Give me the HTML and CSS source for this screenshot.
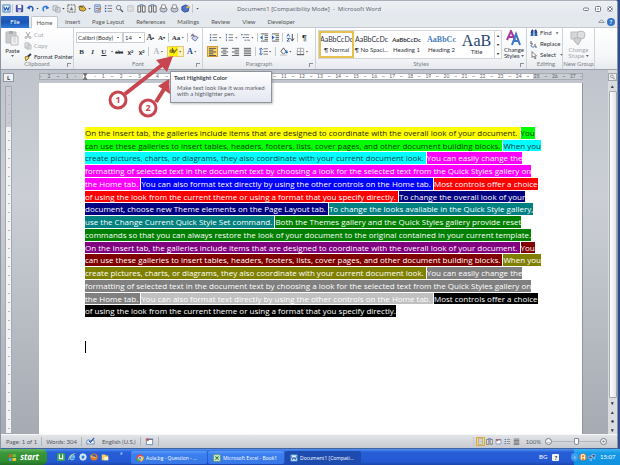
FILE: index.html
```html
<!DOCTYPE html>
<html lang="en">
<head>
<meta charset="utf-8">
<title>Document1 [Compatibility Mode] - Microsoft Word</title>
<link rel="stylesheet" href="styles.css">
</head>
<body>
<svg class="sprite" aria-hidden="true">
  <symbol id="word" viewBox="0 0 10 10"><path d="M1 1h8v8H1z" fill="#e7f2fc" stroke="#3a7ec0"/><path d="M2 3l1.3 4L5 4l1.6 3L8 3" fill="none" stroke="#1c5ba8" stroke-width="1.2"/></symbol>
  <symbol id="save" viewBox="0 0 10 10"><path d="M1.5 1.5h7v7h-7z" fill="#5b62b8" stroke="#34358a"/><path d="M3 1h4v3.500H3z" fill="#fff"/><path d="M3.500 6h3v3h-3z" fill="#c9cdf0"/></symbol>
  <symbol id="undo" viewBox="0 0 10 10"><path d="M3 4c3-3 6 0 4 4" fill="none" stroke="#2a62b8" stroke-width="1.600"/><path d="M0.500 4.500L4.500 1.500V6z" fill="#2a62b8"/></symbol>
  <symbol id="redo" viewBox="0 0 10 10"><path d="M7 4C4 1 1 4 3 8" fill="none" stroke="#2a78d0" stroke-width="1.600"/><path d="M9.500 4.500L5.500 1.500V6z" fill="#2a78d0"/></symbol>
  <symbol id="shapes" viewBox="0 0 10 10"><path d="M1 2h5v5H1zM4 4h5v5H4z" fill="#ddd" stroke="#a9adb3"/></symbol>
  <symbol id="frame" viewBox="0 0 10 10"><path d="M1 1h8v8H1z" fill="none" stroke="#555" stroke-dasharray="2 1"/><path d="M3 7l2-4 2 4z" fill="#777"/></symbol>
  <symbol id="tag" viewBox="0 0 10 10"><path d="M1 3l5-1 3 4-3 2-4-1z" fill="#e0b13c" stroke="#776020"/><path d="M2 2l3 2" stroke="#333"/></symbol>
  <symbol id="doc" viewBox="0 0 10 10"><path d="M2 1h6v8H2z" fill="#e9f1fb" stroke="#527bb0"/><path d="M3 3h4M3 5h4M3 7h2" stroke="#5a7fb8"/><path d="M5 8l4-4" stroke="#d27f31" stroke-width="1.500"/></symbol>
  <symbol id="list" viewBox="0 0 10 10"><path d="M1 2h1.500M1 5h1.500M1 8h1.500" stroke="#315faf" stroke-width="1.500"/><path d="M4 2h5M4 5h5M4 8h5" stroke="#777"/></symbol>
  <symbol id="find" viewBox="0 0 10 10"><circle cx="4" cy="4" r="2.500" fill="#e5eef7" stroke="#69727e"/><path d="M6 6l3 3" stroke="#555" stroke-width="1.500"/></symbol>
  <symbol id="page" viewBox="0 0 10 10"><path d="M2 2h6v6H2z" fill="#eee" stroke="#b8bcc2"/><path d="M3 4h4M3 6h4" stroke="#ccc"/></symbol>
  <symbol id="columns" viewBox="0 0 10 10"><path d="M1 2h3v7H1zM6 2h3v7H6z" fill="#f6f6f6" stroke="#555"/><path d="M3 1h4" stroke="#3671bb"/></symbol>
  <symbol id="print" viewBox="0 0 10 10"><ellipse cx="5" cy="6" rx="4" ry="3" fill="#c3c6d0" stroke="#777e91"/><path d="M3 1h4v4H3z" fill="#fff" stroke="#888"/></symbol>
  <symbol id="puzzle" viewBox="0 0 10 10"><path d="M1 3l4-2 4 2-1 5-4 1-3-2z" fill="#4d76ca" stroke="#28468f"/><path d="M6 4l3-1" stroke="#edb83e" stroke-width="2"/></symbol>
  <symbol id="min" viewBox="0 0 8 8"><rect x="1.500" y="3" width="5" height="2.500" rx="1" fill="#fff" stroke="#737983"/></symbol>
  <symbol id="max" viewBox="0 0 8 8"><rect x="1.500" y="1.500" width="5" height="5" rx="1" fill="#fff" stroke="#737983"/><path d="M3 4h2" stroke="#737983"/></symbol>
  <symbol id="close" viewBox="0 0 8 8"><path d="M2 2l4 4M6 2L2 6" stroke="#737983" stroke-width="2.600"/><path d="M2 2l4 4M6 2L2 6" stroke="#fff"/></symbol>
  <symbol id="paste" viewBox="0 0 14 16"><path d="M1 2h10v11H1z" fill="#c8cacd" stroke="#b5b7ba"/><path d="M4 1h4v3H4z" fill="#aaa"/><path d="M6 6h7v9H6z" fill="#f2f2f3" stroke="#b8babd"/><path d="M8 8h3M8 10h3M8 12h3" stroke="#ccc"/></symbol>
  <symbol id="cut" viewBox="0 0 8 8"><path d="M2 1l3 5M6 1L3 6" stroke="#aaa"/><circle cx="2" cy="6.500" r="1" fill="none" stroke="#aaa"/><circle cx="6" cy="6.500" r="1" fill="none" stroke="#aaa"/></symbol>
  <symbol id="copy" viewBox="0 0 8 8"><path d="M1 1h4v5H1zM3 3h4v4H3z" fill="#eee" stroke="#b4b6ba"/></symbol>
  <symbol id="brush" viewBox="0 0 8 8"><path d="M1 4l3-1 1 2-3 3z" fill="#f1d36a" stroke="#9b7c27"/><path d="M4 3.500L7 1" stroke="#333b55" stroke-width="2"/></symbol>
  <symbol id="eraser" viewBox="0 0 10 10"><path d="M2 6l3-3 4 2-3 4z" fill="#d4d8f0" stroke="#646f9c"/><path d="M1 4l2-3 2 3M2 3h2" stroke="#657" fill="none"/></symbol>
  <symbol id="hl" viewBox="0 0 10 10"><path d="M0 0h10v10H0z" fill="#fff200"/><path d="M1 4c2-2 3 0 2 2-2 0-2-1-2-2M4 1v5c2 0 2-3 0-3" fill="none" stroke="#49462d"/><path d="M5 7l4-5" stroke="#79713e" stroke-width="1.500"/></symbol>
  <symbol id="numbers" viewBox="0 0 10 10"><path d="M1.500 1v2M1.500 4v2M1.500 7v2" stroke="#315faf"/><path d="M4 2h5M4 5h5M4 8h5" stroke="#777"/></symbol>
  <symbol id="multi" viewBox="0 0 10 10"><path d="M0 2h2M2 5h2M4 8h2" stroke="#315faf"/><path d="M3 2h6M5 5h4M7 8h3" stroke="#777"/></symbol>
  <symbol id="outdent" viewBox="0 0 10 10"><path d="M1 1h8M5 3h4M5 5h4M5 7h4M1 9h8" stroke="#555"/><path d="M0 5l3-2.500v5z" fill="#2764b8"/></symbol>
  <symbol id="indent" viewBox="0 0 10 10"><path d="M1 1h8M5 3h4M5 5h4M5 7h4M1 9h8" stroke="#555"/><path d="M4 5L1 2.500v5z" fill="#2764b8"/></symbol>
  <symbol id="sort" viewBox="0 0 10 10"><path d="M1 4l1.500-3L4 4M1 6h3L1 9h3" fill="none" stroke="#315faf"/><path d="M7 1v7M5 6l2 3 2-3" fill="none" stroke="#444"/></symbol>
  <symbol id="left" viewBox="0 0 10 10"><path d="M1 1.500h8M1 3.500h5M1 5.500h8M1 7.500h5M1 9.500h8" stroke="#444"/></symbol>
  <symbol id="center" viewBox="0 0 10 10"><path d="M1 1.500h8M3 3.500h4M1 5.500h8M3 7.500h4M1 9.500h8" stroke="#555"/></symbol>
  <symbol id="right" viewBox="0 0 10 10"><path d="M1 1.500h8M4 3.500h5M1 5.500h8M4 7.500h5M1 9.500h8" stroke="#555"/></symbol>
  <symbol id="justify" viewBox="0 0 10 10"><path d="M1 1.500h8M1 3.500h8M1 5.500h8M1 7.500h8M1 9.500h8" stroke="#555"/></symbol>
  <symbol id="spacing" viewBox="0 0 10 10"><path d="M2 2v6M0 3l2-2 2 2M0 7l2 2 2-2" fill="none" stroke="#315faf"/><path d="M5 2h5M5 5h5M5 8h5" stroke="#777"/></symbol>
  <symbol id="bucket" viewBox="0 0 10 10"><path d="M2 5l3-4 3 4-3 3z" fill="#f0f3f8" stroke="#555"/><path d="M8 4l1 3" stroke="#2866ba" stroke-width="2"/><path d="M1 9h8" stroke="#bbb"/></symbol>
  <symbol id="border" viewBox="0 0 10 10"><path d="M1.500 1.500h7v7h-7zM5 1v7M1 5h7" fill="none" stroke="#aaa"/><path d="M1 8.500h8" stroke="#444"/></symbol>
  <symbol id="styles" viewBox="0 0 16 16"><path d="M1 10L5 1l4 9M2.500 7h5" fill="none" stroke="#a93ba0" stroke-width="2"/><path d="M6 15l4-11 4 11M8 11h5" fill="none" stroke="#3b77c4" stroke-width="2"/></symbol>
  <symbol id="binoc" viewBox="0 0 8 8"><path d="M2 1h1v3H1zM5 1h1l1 3H5z" stroke="#24488c" fill="#24488c"/><path d="M1 4h2.500v3H.5zM4.500 4H7l.5 3h-3z" fill="#315fae"/></symbol>
  <symbol id="replace" viewBox="0 0 8 8"><path d="M1 1v3h2M5 4v3h2" fill="none" stroke="#555"/><path d="M1 5c0 2 1 2 3 2" fill="none" stroke="#2866ba"/></symbol>
  <symbol id="cursor" viewBox="0 0 8 8"><path d="M2 .5v6l1.500-1.500L5 8l1-.5L4.700 5H6.500z" fill="#fff" stroke="#555" stroke-width=".7"/></symbol>
  <symbol id="shape" viewBox="0 0 16 16"><path d="M1 2h8v7H1z" fill="#d7d8da" stroke="#bbb"/><circle cx="11" cy="5" r="4" fill="#dedfe1" stroke="#bbb"/><path d="M4 8h7v2l-3 5-4-4z" fill="#cfd0d2" stroke="#b6b8bb"/></symbol>
  <symbol id="flag" viewBox="0 0 10 10"><path d="M1 2l3-1v3.500l-3 .5z" fill="#e95b2b"/><path d="M5 1l4 .5v3L5 4.500z" fill="#72bd38"/><path d="M1 6l3-.5V9l-3-.5z" fill="#5a9cf5"/><path d="M5 5.500h4v3L5 9z" fill="#f5c92f"/></symbol>
  <symbol id="utor" viewBox="0 0 10 10"><rect width="10" height="10" rx="2" fill="#35a451"/><path d="M3 2v5h3M7 2v6" fill="none" stroke="#fff" stroke-width="1.500"/></symbol>
  <symbol id="ie" viewBox="0 0 10 10"><path d="M2 5h6c-1-5-7-2-5 2 1 2 4 1 5 0" fill="none" stroke="#77c8f7" stroke-width="1.700"/><path d="M1 9C0 6 6 0 9 1" fill="none" stroke="#f3cf4f"/></symbol>
  <symbol id="globe" viewBox="0 0 10 10"><circle cx="5" cy="5" r="4" fill="#bde1f8" stroke="#edf8ff"/><path d="M3 5l2-2 2 1-2 4z" fill="#347bc0"/></symbol>
  <symbol id="fox" viewBox="0 0 10 10"><circle cx="5" cy="5" r="4.500" fill="#e87920"/><circle cx="5" cy="4" r="2.500" fill="#395eae"/><path d="M1 3c1 4 4 1 6 3" fill="none" stroke="#ffc34a" stroke-width="1.500"/></symbol>
  <symbol id="folder" viewBox="0 0 10 10"><path d="M1 2h4l1 1h3v6H1z" fill="#f7cf65"/><path d="M4 5h5v4H4z" fill="#fff3c1"/></symbol>
  <symbol id="chrome" viewBox="0 0 10 10"><circle cx="5" cy="5" r="4.500" fill="#e24b39"/><path d="M.5 5A4.500 4.500 0 0 0 5 9.500L6.500 6 3 6z" fill="#4bae4f"/><path d="M5 9.500A4.500 4.500 0 0 0 9 3H5l2 3z" fill="#f6cf3b"/><circle cx="5" cy="5" r="2" fill="#4b8de5" stroke="#fff" stroke-width=".7"/></symbol>
  <symbol id="excel" viewBox="0 0 10 10"><path d="M1 1h8v8H1z" fill="#edf8e8" stroke="#69ad45"/><path d="M3 3l4 4M7 3L3 7" stroke="#258734" stroke-width="1.500"/></symbol>
  <symbol id="layout" viewBox="0 0 10 10"><path d="M2 1h6v8H2z" fill="#f7f7f7" stroke="#8c9097"/><path d="M3 3h4M3 5h4M3 7h4" stroke="#9fa3a9"/></symbol>
  <symbol id="proof" viewBox="0 0 10 10"><path d="M1 4c2-2 3 0 4 0s3-1 4 0v4c-2-1-3 0-4 0s-2-1-4 0z" fill="#fff" stroke="#6383b6"/><path d="M3 4l2 2 4-5" fill="none" stroke="#225bb5" stroke-width="1.300"/></symbol>
  <symbol id="macro" viewBox="0 0 10 10"><path d="M1.500 2.500h7v6h-7z" fill="#fff" stroke="#6784b4"/><path d="M1 2.500h8" stroke="#42659e"/><circle cx="3" cy="3" r="1.500" fill="#cf5341"/></symbol>
  <symbol id="network" viewBox="0 0 10 10"><path d="M1 4h4v3H1zM5 2h4v3H5z" fill="#284677" stroke="#a7c5ed"/><path d="M2 9h3M7 7h2" stroke="#dce9ff"/></symbol>
  <symbol id="avast" viewBox="0 0 10 10"><circle cx="5" cy="5" r="4.500" fill="#ef8129"/><path d="M3 8V4c0-3 4-3 4 0v4M4 6h3" fill="none" stroke="#fff" stroke-width="1.300"/></symbol>
</svg>

<div class="window">
  <header class="titlebar">
    <div class="quick">
      <svg><use href="#word"/></svg><i></i>
      <button aria-label="Save"><svg><use href="#save"/></svg></button>
      <button class="drop" aria-label="Undo"><svg><use href="#undo"/></svg></button>
      <button aria-label="Redo"><svg><use href="#redo"/></svg></button>
      <button class="drop" aria-label="Shapes"><svg><use href="#shapes"/></svg></button>
      <button aria-label="Frame"><svg><use href="#frame"/></svg></button>
      <button class="drop" aria-label="Label"><svg><use href="#tag"/></svg></button>
      <button aria-label="Edit document"><svg><use href="#doc"/></svg></button>
      <button aria-label="List"><svg><use href="#list"/></svg></button>
      <button aria-label="Preview"><svg><use href="#find"/></svg></button>
      <button aria-label="Page"><svg><use href="#page"/></svg></button>
      <button aria-label="Columns"><svg><use href="#columns"/></svg></button>
      <button aria-label="Pages"><svg><use href="#columns"/></svg></button>
      <button aria-label="Print"><svg><use href="#print"/></svg></button>
      <button aria-label="Print preview"><svg><use href="#print"/></svg></button>
      <button aria-label="Add-in"><svg><use href="#puzzle"/></svg></button><i></i>
      <button class="more" aria-label="Customize"></button>
    </div>
    <h1>Document1 [Compatibility Mode]&nbsp; -&nbsp; Microsoft Word</h1>
    <div class="controls">
      <button aria-label="Minimize"><svg><use href="#min"/></svg></button>
      <button aria-label="Restore"><svg><use href="#max"/></svg></button>
      <button aria-label="Close"><svg><use href="#close"/></svg></button>
    </div>
  </header>

  <nav class="tabs">
    <button class="file">File</button><button class="active">Home</button><button>Insert</button><button>Page Layout</button><button>References</button><button>Mailings</button><button>Review</button><button>View</button><button>Developer</button>
    <span class="help"><svg viewBox="0 0 8 8"><path d="M1 5l3-3 3 3z" fill="#fff" stroke="#777e88"/></svg><button aria-label="Help">?</button></span>
  </nav>

  <section class="ribbon">
    <div class="group clipboard">
      <div class="body">
        <button class="big"><svg><use href="#paste"/></svg><span>Paste</span><b class="caret"></b></button>
        <div class="stack">
          <button class="muted"><svg><use href="#cut"/></svg>Cut</button>
          <button class="muted"><svg><use href="#copy"/></svg>Copy</button>
          <button><svg><use href="#brush"/></svg>Format Painter</button>
        </div>
      </div>
      <footer>Clipboard<span class="launch"></span></footer>
    </div>
    <div class="group font">
      <div class="rows">
        <div class="row">
          <select class="family" aria-label="Font"><option>Calibri (Body)</option></select><select class="size" aria-label="Font size"><option>14</option></select>
          <button class="serif grow">A<sup>▴</sup></button><button class="serif">A<sup>▾</sup></button><i></i>
          <button class="split case">Aa<b class="caret"></b></button><i></i>
          <button aria-label="Clear formatting"><svg><use href="#eraser"/></svg></button>
        </div>
        <div class="row">
          <button class="serif bold">B</button><button class="serif italic">I</button><button class="serif under">U</button><b class="caret"></b>
          <button class="strike">abc</button><button class="script">x<sub>2</sub></button><button class="script">x<sup>2</sup></button><i></i>
          <button class="split effect">A<b class="caret"></b></button>
          <button class="split highlight" aria-label="Text Highlight Color"><svg><use href="#hl"/></svg><b class="caret"></b></button>
          <button class="split color">A<b class="caret"></b></button>
        </div>
      </div>
      <footer>Font<span class="launch"></span></footer>
    </div>
    <div class="group para">
      <div class="rows">
        <div class="row">
          <button class="split" aria-label="Bullets"><svg><use href="#list"/></svg><b class="caret"></b></button>
          <button class="split" aria-label="Numbering"><svg><use href="#numbers"/></svg><b class="caret"></b></button>
          <button class="split" aria-label="Multilevel list"><svg><use href="#multi"/></svg><b class="caret"></b></button><i></i>
          <button aria-label="Decrease indent"><svg><use href="#outdent"/></svg></button><button aria-label="Increase indent"><svg><use href="#indent"/></svg></button><i></i>
          <button aria-label="Sort"><svg><use href="#sort"/></svg></button><i></i><button class="mark">¶</button>
        </div>
        <div class="row">
          <button class="chosen" aria-label="Align left"><svg><use href="#left"/></svg></button><button aria-label="Center"><svg><use href="#center"/></svg></button><button aria-label="Align right"><svg><use href="#right"/></svg></button><button aria-label="Justify"><svg><use href="#justify"/></svg></button><i></i>
          <button class="split" aria-label="Line spacing"><svg><use href="#spacing"/></svg><b class="caret"></b></button><i></i>
          <button class="split" aria-label="Shading"><svg><use href="#bucket"/></svg><b class="caret"></b></button>
          <button class="split" aria-label="Borders"><svg><use href="#border"/></svg><b class="caret"></b></button>
        </div>
      </div>
      <footer>Paragraph<span class="launch"></span></footer>
    </div>
    <div class="group style-group">
      <div class="body">
        <div class="gallery">
          <button class="picked"><span>AaBbCcDc</span><small>¶ Normal</small></button>
          <button><span>AaBbCcDc</span><small>¶ No Spaci...</small></button>
          <button class="h1"><span>AaBbCcDc</span><small>Heading 1</small></button>
          <button class="h2"><span>AaBbCc</span><small>Heading 2</small></button>
          <button class="title"><span>AaB</span><small>Title</small></button>
          <div class="scroller"><b>▴</b><b>▾</b><b>▾</b></div>
        </div>
        <button class="big"><svg><use href="#styles"/></svg><span>Change<br>Styles <b class="caret"></b></span></button>
      </div>
      <footer>Styles<span class="launch"></span></footer>
    </div>
    <div class="group editing">
      <div class="stack">
        <button><svg><use href="#binoc"/></svg>Find <b class="caret"></b></button>
        <button><svg><use href="#replace"/></svg>Replace</button>
        <button><svg><use href="#cursor"/></svg>Select <b class="caret"></b></button>
      </div>
      <footer>Editing</footer>
    </div>
    <div class="group new">
      <div class="body"><button class="big muted"><svg><use href="#shape"/></svg><span>Change<br>Shape <b class="caret"></b></span></button></div>
      <footer>New Group</footer>
    </div>
  </section>

  <main class="workspace">
    <aside class="left-ruler"><span class="corner">L</span><div class="vertical"></div></aside>
    <div class="canvas">
      <div class="ruler"><span>2</span><span>1</span><span class="origin"></span><span>1</span><span>2</span><span>3</span><span>4</span><span>5</span><span>6</span><span>7</span><span>8</span><span>9</span><span>10</span><span>11</span><span>12</span><span>13</span><span>14</span><span>15</span><span>16</span><span>17</span><span>18</span><span>19</span><span>20</span><span>21</span><span>22</span><span>23</span><span>24</span><span>25</span><span>26</span><span>27</span></div>
      <article class="page">
        <div class="text">
          <p><mark class="yellow">On the Insert tab, the galleries include items that are designed to coordinate with the overall look of your document. </mark><mark class="lime">You</mark></p>
          <p><mark class="lime">can use these galleries to insert tables, headers, footers, lists, cover pages, and other document building blocks. </mark><mark class="cyan">When you</mark></p>
          <p><mark class="cyan">create pictures, charts, or diagrams, they also coordinate with your current document look. </mark><mark class="pink">You can easily change the</mark></p>
          <p><mark class="pink">formatting of selected text in the document text by choosing a look for the selected text from the Quick Styles gallery on</mark></p>
          <p><mark class="pink">the Home tab. </mark><mark class="blue">You can also format text directly by using the other controls on the Home tab. </mark><mark class="red">Most controls offer a choice</mark></p>
          <p><mark class="red">of using the look from the current theme or using a format that you specify directly. </mark><mark class="navy">To change the overall look of your</mark></p>
          <p><mark class="navy">document, choose new Theme elements on the Page Layout tab. </mark><mark class="teal">To change the looks available in the Quick Style gallery,</mark></p>
          <p><mark class="teal">use the Change Current Quick Style Set command. </mark><mark class="green">Both the Themes gallery and the Quick Styles gallery provide reset</mark></p>
          <p><mark class="green">commands so that you can always restore the look of your document to the original contained in your current template.</mark></p>
          <p><mark class="purple">On the Insert tab, the galleries include items that are designed to coordinate with the overall look of your document. </mark><mark class="maroon">You</mark></p>
          <p><mark class="maroon">can use these galleries to insert tables, headers, footers, lists, cover pages, and other document building blocks. </mark><mark class="olive">When you</mark></p>
          <p><mark class="olive">create pictures, charts, or diagrams, they also coordinate with your current document look. </mark><mark class="gray">You can easily change the</mark></p>
          <p><mark class="gray">formatting of selected text in the document text by choosing a look for the selected text from the Quick Styles gallery on</mark></p>
          <p><mark class="gray">the Home tab. </mark><mark class="silver">You can also format text directly by using the other controls on the Home tab. </mark><mark class="black">Most controls offer a choice</mark></p>
          <p><mark class="black">of using the look from the current theme or using a format that you specify directly.</mark></p>
        </div>
        <div class="insertion"></div>
      </article>
    </div>
    <aside class="scrollbar"><span class="ruler-toggle"><svg><use href="#find"/></svg></span><b>▴</b><div class="thumb"></div><b>▾</b><b>▴</b><b>●</b><b>▾</b></aside>
  </main>

  <footer class="status">
    <span>Page: 1 of 1</span><i></i><span>Words: 304</span><i></i><svg><use href="#proof"/></svg><span class="lang">English (U.S.)</span><i></i><svg><use href="#macro"/></svg><i></i>
    <div class="views">
      <i></i><button class="chosen" aria-label="Print layout"><svg><use href="#layout"/></svg></button><button aria-label="Reading"><svg><use href="#columns"/></svg></button><button aria-label="Web layout"><svg><use href="#macro"/></svg></button><button aria-label="Outline"><svg><use href="#list"/></svg></button><button aria-label="Draft"><svg><use href="#justify"/></svg></button>
      <label for="zoom">100%</label><button class="round" aria-label="Zoom out">−</button><input id="zoom" type="range" min="0" max="100" value="50"><button class="round" aria-label="Zoom in">+</button>
    </div>
  </footer>
</div>

<footer class="taskbar">
  <button class="start"><svg><use href="#flag"/></svg>start</button>
  <div class="launchers"><svg><use href="#utor"/></svg><svg><use href="#ie"/></svg><svg><use href="#globe"/></svg><svg><use href="#fox"/></svg><svg><use href="#folder"/></svg><span>»</span></div>
  <button class="task"><svg><use href="#chrome"/></svg>Aula.bg - Question - ...</button>
  <button class="task"><svg><use href="#excel"/></svg>Microsoft Excel - Book1</button>
  <button class="task current"><svg><use href="#word"/></svg>Document1 [Compati...</button>
  <div class="lang-bar">BG <b class="key">?</b></div>
  <div class="tray"><span class="chevron">‹</span><svg><use href="#avast"/></svg><svg><use href="#network"/></svg><time>15:07</time></div>
</footer>

<div class="tooltip" role="tooltip"><strong>Text Highlight Color</strong><p>Make text look like it was marked<br>with a highlighter pen.</p></div>
<svg class="arrows" viewBox="0 0 80 70" aria-hidden="true">
  <g fill="none" stroke="#c8454f" stroke-width="4"><path d="M25 44L62 15M56 52L66 36"/></g>
  <path d="M73 6L67 22L56 10zM69 29L70 44L58 36z" fill="#c8454f"/>
  <g fill="#fff" stroke="#c8454f" stroke-width="3"><circle cx="18" cy="50" r="8"/><circle cx="48" cy="58" r="8"/></g>
  <text x="18" y="53">1</text><text x="48" y="61">2</text>
</svg>
</body>
</html>
```
FILE: styles.css
```css
* { box-sizing: border-box; }
body { margin: 0; height: 100vh; display: flex; flex-direction: column; overflow: hidden; background: #2e4c91; font: 6px/8px Lato, sans-serif; color: #30343a; }
button, select, input { font: inherit; color: inherit; margin: 0; padding: 0; border: 0; background: none; }
button { display: flex; align-items: center; justify-content: center; white-space: nowrap; }
h1, p { margin: 0; }
svg { width: 9px; height: 9px; flex: none; }
.sprite { position: absolute; width: 0; height: 0; }
.caret { display: inline-block; width: 3px; height: 2px; margin-left: 2px; background: #666; clip-path: polygon(0 0, 100% 0, 50% 100%); flex: none; }

.window { flex: 1; min-height: 0; display: flex; flex-direction: column; margin-right: 2px; border: 1px solid #8c95a4; border-top-color: #aab0ba; border-bottom: 1px solid #41639e; border-radius: 0 3px 0 0; background: #e4e9f0; }
.titlebar { height: 15px; flex: none; display: flex; align-items: center; position: relative; background: linear-gradient(#edf0f4, #e3e8ee); }
.quick { display: flex; align-items: center; padding-left: 1px; }
.quick button { width: 11px; height: 12px; }
.quick .drop { width: 15px; }
.quick .drop::after, .quick .more::after { content: ""; width: 3px; height: 2px; margin-left: 1px; background: #444; clip-path: polygon(0 0, 100% 0, 50% 100%); }
.quick .more { width: 6px; }
.quick i { margin: 0 1px; }
i { width: 1px; height: 9px; margin: 0 2px; background: #c3c7ce; flex: none; }
h1 { position: absolute; left: 0; right: 0; text-align: center; font: 400 6px/14px "Open Sans", sans-serif; color: #555b65; pointer-events: none; }
.controls { margin-left: auto; display: flex; gap: 4px; padding-right: 3px; }
.controls svg { width: 8px; height: 8px; }

.tabs { height: 12px; flex: none; display: flex; background: #e4e9ee; border-bottom: 1px solid #c5cad1; }
.tabs > button { height: 12px; padding: 0 6px; color: #555; }
.tabs .file { width: 28px; margin-right: 2px; background: linear-gradient(#2664c4, #1954b4 50%, #2f79dc); color: #fff; border-radius: 1px 1px 0 0; }
.tabs .active { width: 27px; margin-right: 1px; background: #fff; border: 1px solid #c2c7ce; border-bottom: 0; border-radius: 2px 2px 0 0; }
.help { margin-left: auto; display: flex; align-items: center; gap: 2px; padding-right: 2px; }
.help svg { width: 7px; height: 7px; }
.help button { width: 8px; height: 8px; border-radius: 50%; background: #3375c8; color: #fff; font-weight: 700; }

.ribbon { height: 42px; flex: none; display: flex; background: linear-gradient(#fff, #f4f6f8 70%, #e7eaee); border-bottom: 1px solid #9ba1aa; }
.group { display: flex; flex-direction: column; border-right: 1px solid #cfd3d9; flex: none; }
.group footer { position: relative; height: 9px; margin-top: auto; text-align: center; white-space: nowrap; color: #7a7f87; }
.launch { position: absolute; right: 2px; bottom: 2px; width: 4px; height: 4px; border-left: 1px solid #8c9199; border-top: 1px solid #8c9199; }
.body { display: flex; padding-top: 2px; height: 32px; }
.big { flex-direction: column; justify-content: flex-start; line-height: 6px; }
.big svg { width: 16px; height: 16px; margin-bottom: 1px; }
.stack { display: flex; flex-direction: column; justify-content: space-around; height: 32px; }
.stack button { justify-content: flex-start; gap: 2px; }
.stack svg { width: 8px; height: 8px; }
.muted { color: #a4a7ac; }
.clipboard { width: 73px; }
.clipboard .big { width: 23px; gap: 1px; }
.font { width: 129px; }
.para { width: 113px; }
.rows { display: flex; flex-direction: column; gap: 3px; padding: 4px 2px 0; }
.row { display: flex; align-items: center; justify-content: space-between; height: 11px; }
.row button { width: 11px; height: 11px; font-size: 7px; }
.row .split { width: 16px; }
.row i { margin: 0 1px; }
.row .caret { margin-left: 1px; }
.family, .size { appearance: none; height: 11px; border: 1px solid #c9cdd4; background: linear-gradient(#666, #666) right 3px center / 2px 1px no-repeat #fff; }
.family { width: 47px; padding-left: 1px; }
.size { width: 22px; padding-left: 1px; }
.serif, .color, .effect, .case { font-family: "Liberation Serif", serif; font-weight: 700; }
.row .grow, .row .color, .row .effect { font-size: 8px; }
sup, sub { font-size: 4px; line-height: 4px; }
.italic { font-style: italic; }
.under { text-decoration: underline; }
.strike { text-decoration: line-through; }
.row .strike { font-size: 5px; font-weight: 700; }
.script { font-weight: 700; }
.effect { color: #b4b7bb; }
.color { color: #244e94; }
.row .highlight { width: 17px; border: 1px solid #e8c869; background: #fdf3b8; }
.row .chosen { border: 1px solid #d49c2c; background: #fbd774; }
.para .row { padding: 0 3px 0 2px; }
.style-group { width: 211px; }
.gallery { display: grid; grid-template-columns: repeat(5, 35px) 7px; height: 29px; margin-left: 2px; border: 1px solid #d3d7dc; background: #fff; }
.gallery button { flex-direction: column; gap: 2px; overflow: hidden; }
.gallery span { font: 7px/9px Lato, sans-serif; }
.gallery small { font-size: 6px; line-height: 8px; }
.gallery .picked { border: 2px solid #e7c14e; }
.gallery .h1 span { font-size: 6px; font-weight: 700; }
.gallery .h2 span { color: #4a7ebb; font: 700 8px/9px "Liberation Serif", serif; }
.gallery .title span { color: #25476f; font: 16px/14px "Liberation Serif", serif; }
.gallery .title { gap: 0; }
.scroller { display: flex; flex-direction: column; justify-content: space-around; text-align: center; border-left: 1px solid #d3d7dc; font-size: 4px; }
.style-group .big { width: 24px; }
.editing { width: 36px; padding-left: 3px; }
.new { width: 32px; }
.new .body { justify-content: center; }
.big .caret { margin: 0 0 1px; }

.workspace { flex: 1; min-height: 0; display: grid; grid-template-columns: 38px minmax(0, 1fr) 34px; background: linear-gradient(#c0c5cd, #cbcfd5 35%, #a6abb3); }
.left-ruler { display: flex; flex-direction: column; gap: 4px; padding: 3px 0 0 2px; }
.corner { width: 11px; height: 9px; border: 1px solid #9198a4; background: #eef0f3; text-align: center; font-weight: 700; line-height: 8px; }
.vertical { width: 7px; flex: 1; margin-left: 2px; border: 1px solid #a4a9b1; background: repeating-linear-gradient(transparent 0 8px, #b5b9c0 8px 9px) center / 2px 100% no-repeat, linear-gradient(#c8ccd2 0 40px, #f2f4f6 40px); }
.canvas { display: flex; flex-direction: column; gap: 3px; padding-top: 3px; }
.ruler { height: 7px; display: flex; border: 1px solid #a6abb4; background: linear-gradient(90deg, #c9cdd4 8%, #fff 8% 91%, #c9cdd4 91%); }
.ruler span { flex: 1 1 0; min-width: 0; display: flex; justify-content: space-between; align-items: center; font-size: 5px; line-height: 5px; color: #5f6369; }
.ruler span::before, .ruler span::after { content: "·"; }
.ruler .origin { justify-content: center; }
.ruler .origin::before { content: ""; width: 5px; height: 7px; background: #777; clip-path: polygon(0 0, 100% 0, 60% 50%, 100% 100%, 0 100%, 40% 50%); }
.ruler .origin::after { content: none; }
.page { flex: 1; padding: 44px 46px 0; background: #fff; border-right: 1px solid #8f959e; }
.text { height: 190px; display: grid; grid-auto-rows: 1fr; gap: 1px; font: 8px/11px "Open Sans", sans-serif; }
.text p { display: flex; gap: 1px; min-height: 0; white-space: pre; }
mark { color: #fff; }
.yellow { background: #ff0; color: #252500; }
.lime { background: #0f0; color: #003800; }
.cyan { background: #0ff; color: #003a3a; }
.pink { background: #f0f; }
.blue { background: #00f; }
.red { background: #f00; }
.navy { background: #000080; }
.teal { background: #008080; }
.green { background: #008000; }
.purple { background: #800080; }
.maroon { background: #800000; }
.olive { background: #808000; }
.gray { background: #808080; }
.silver { background: #c0c0c0; }
.black { background: #000; }
.insertion { width: 1px; height: 12px; margin-top: 24px; background: #000; }
.scrollbar { width: 9px; margin-left: auto; display: flex; flex-direction: column; align-items: center; gap: 1px; padding-top: 3px; background: #d9dde2; }
.scrollbar b { height: 8px; font-size: 5px; }
.ruler-toggle { width: 9px; height: 8px; display: flex; border: 1px solid #9fa5af; background: #eee; }
.ruler-toggle svg { width: 7px; height: 6px; }
.thumb { flex: 1; width: 8px; border: 1px solid #a2a8b2; border-radius: 1px; background: linear-gradient(90deg, #fff, #dfe3e8); }

.status { height: 14px; flex: none; display: flex; align-items: center; padding: 0 10px 0 5px; border-top: 1px solid #f6f7f9; background: linear-gradient(#e2e4e8, #c7cbd1); color: #555a62; }
.status > i { margin: 0 4px; background: #b0b4bb; }
.lang { margin-left: 7px; }
.views { margin-left: auto; display: flex; align-items: center; }
.views button { width: 9px; height: 9px; }
.views svg { width: 7px; height: 7px; }
.views .chosen { border: 1px solid #dca93c; background: #fbdc83; }
.views label { margin: 0 4px 0 5px; }
.views .round { width: 7px; height: 7px; border: 1px solid #777d86; border-radius: 50%; background: #f6f7f8; font-size: 6px; }
.views input { appearance: none; width: 48px; height: 8px; background: linear-gradient(#b4b8be, #b4b8be) center / 100% 1px no-repeat; }
.views input::-webkit-slider-thumb { appearance: none; width: 5px; height: 7px; border: 1px solid #888e97; border-radius: 1px 1px 3px 3px; background: #fff; }

.taskbar { height: 16px; flex: none; display: flex; align-items: stretch; background: linear-gradient(#4f91ee, #275fd9 20%, #2459d2 80%, #1b45aa); color: #fff; }
.start { width: 47px; gap: 3px; border-radius: 0 5px 5px 0; background: linear-gradient(#63b45d, #389738 25%, #318e32 75%, #236f26); font: italic 700 8px/14px "Open Sans", sans-serif; color: #fff; }
.launchers { width: 84px; display: flex; align-items: center; gap: 3px; padding-left: 10px; }
.launchers svg { width: 8px; height: 8px; }
.launchers span { margin-left: 8px; align-self: flex-start; }
.task { width: 76px; margin: 2px 1px 1px 0; gap: 2px; padding-left: 5px; justify-content: flex-start; border-radius: 2px; background: linear-gradient(#5b9af7, #3b7ff0 25%, #3877e6); font: 5px/8px "Open Sans", sans-serif; color: #fff; }
.task svg { width: 8px; height: 8px; }
.task.current { background: #1d4cae; }
.lang-bar { margin-left: auto; width: 35px; display: flex; align-items: center; gap: 5px; }
.key { width: 7px; height: 7px; border-radius: 1px; background: #f2f2f2; color: #222; text-align: center; line-height: 7px; }
.tray { width: 46px; display: flex; align-items: center; gap: 1px; background: linear-gradient(#3fb5f2, #149ae8 25%, #1190df); }
.chevron { width: 7px; height: 8px; margin-left: -3px; border-radius: 50%; background: #3f9ef0; text-align: center; line-height: 7px; font-weight: 700; }
.tray svg { width: 8px; height: 8px; }
time { margin-left: 3px; }

.tooltip { position: absolute; left: 170px; top: 71px; width: 102px; padding: 2px 3px; border: 1px solid #8f949c; background: linear-gradient(#fff, #e4e7f1); box-shadow: 1px 1px 2px #8888; color: #5a5e66; line-height: 6px; white-space: nowrap; }
.tooltip strong { display: block; font-weight: 700; line-height: 8px; color: #40444c; }
.tooltip p { padding: 3px 0 3px 3px; }
.arrows { position: absolute; left: 100px; top: 50px; width: 80px; height: 70px; pointer-events: none; }
.arrows text { fill: #c8454f; font: 700 9px "Open Sans", sans-serif; text-anchor: middle; }
```
